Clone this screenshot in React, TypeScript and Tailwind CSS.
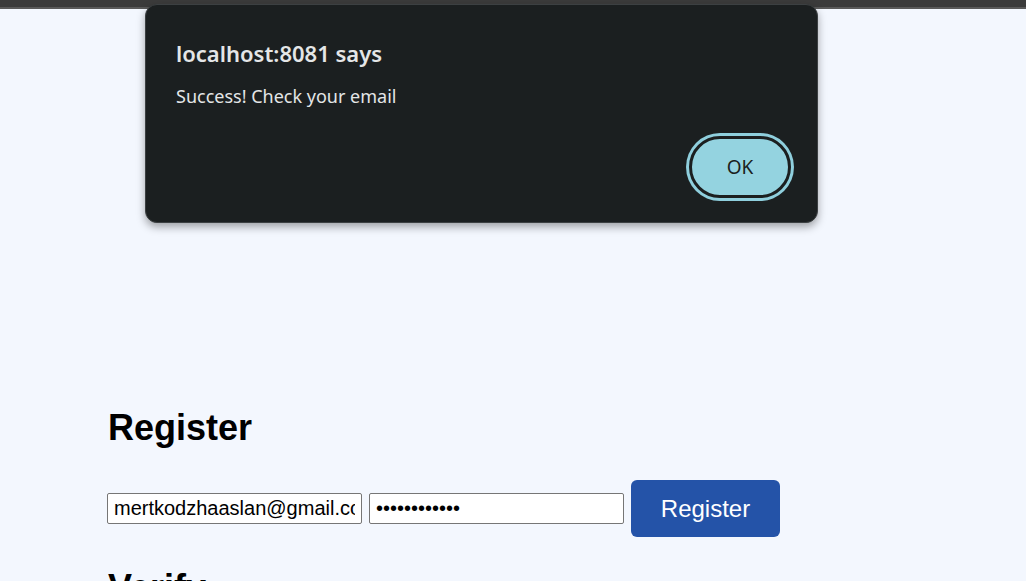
import React from 'react';

const App: React.FC = () => {
    return (
        <div className="relative min-h-[581px] bg-[#f3f7fe] overflow-hidden" style={{ fontFamily: '"Liberation Sans", Arial, sans-serif' }}>
            {/* browser chrome strip */}
            <div className="h-[9px] bg-[#3b3b3b] border-b-2 border-[#5a5a5a]" />

            <main className="pl-[108px] pt-[398px]">
                <h1 className="text-[36px] leading-[41px] font-bold text-black">Register</h1>

                <div className="-ml-px mt-[32px] flex items-center gap-[7px]">
                    <input
                        type="email"
                        defaultValue="mertkodzhaaslan@gmail.com"
                        className="w-[255px] h-[31px] px-[6px] text-[20px] text-black bg-white border border-[#767676] rounded-[2px] outline-none"
                    />
                    <input
                        type="password"
                        defaultValue="secretpass12"
                        className="w-[255px] h-[31px] px-[6px] text-[20px] text-black bg-white border border-[#767676] rounded-[2px] outline-none"
                    />
                    <button className="w-[149px] h-[57px] bg-[#2453a8] text-white text-[24px] rounded-[6px]">
                        Register
                    </button>
                </div>

                <h2 className="mt-[30px] text-[36px] leading-[41px] font-bold text-black">Verify</h2>
            </main>

            {/* alert dialog */}
            <div
                className="absolute left-[145px] top-[4px] w-[673px] h-[219px] rounded-[12px] bg-[#1b1f20] border border-[#3c4042] shadow-[0_4px_8px_rgba(0,0,0,0.35)] flex flex-col pl-[30px] pr-[26px] pt-[33px] pb-[24px]"
                style={{ fontFamily: '"Noto Sans", "Open Sans", sans-serif' }}
            >
                <div className="text-[22px] leading-[30px] font-semibold text-[#e4e6e7]">localhost:8081 says</div>
                <div className="mt-[16px] text-[18px] leading-[24px] text-[#e4e6e7]">Success! Check your email</div>
                <div className="mt-auto flex justify-end">
                    <button className="w-[102px] h-[62px] rounded-full bg-[#94d3e0] border-[3px] border-[#1b1f20] ring-[3px] ring-[#8fcfdd] text-[19px] text-[#1b1f20]">
                        OK
                    </button>
                </div>
            </div>
        </div>
    );
};

export default App;
